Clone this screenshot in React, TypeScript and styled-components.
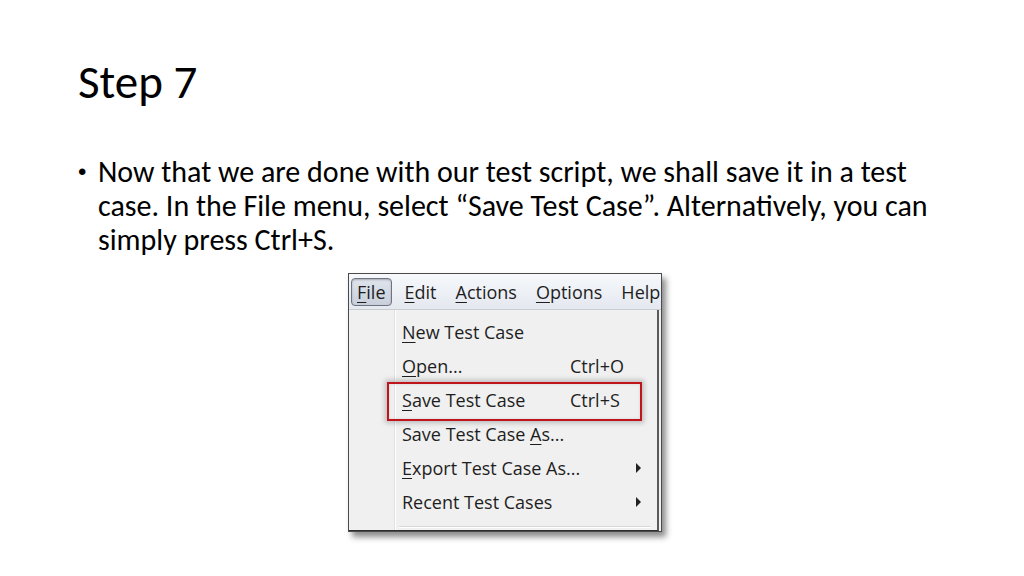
import React from 'react'
import styled, { createGlobalStyle } from 'styled-components'

const GlobalStyle = createGlobalStyle`
    html, body {
        margin: 0;
        padding: 0;
        background: #ffffff;
    }
    body {
        font-family: Carlito, "Open Sans", "Noto Sans", sans-serif;
        color: #000000;
    }
`

const Slide = styled.div`
    width: 1024px;
    height: 576px;
    box-sizing: border-box;
    padding: 52px 0 0 78px;
    display: flex;
    flex-direction: column;
    overflow: hidden;
`

const Title = styled.h1`
    margin: 0;
    font-weight: 400;
    font-size: 47px;
    line-height: 60px;
`

const Bullets = styled.ul`
    margin: 43px 0 0 0;
    padding: 0;
    list-style: none;
    width: 870px;
`

const Bullet = styled.li`
    position: relative;
    padding-left: 20px;
    font-size: 30px;
    line-height: 34px;
    &::before {
        content: '•';
        position: absolute;
        left: 0;
        top: 0;
        font-family: "Liberation Sans", sans-serif;
        font-size: 24px;
    }
`

const Figure = styled.div`
    margin: 16px 0 0 270px;
    display: flex;
`

const Shot = styled.div`
    position: relative;
    width: 314px;
    height: 259px;
    box-sizing: border-box;
    border: 1px solid #4a4a4a;
    background: #f0f0f0;
    box-shadow: 4px 5px 6px rgba(0, 0, 0, 0.45);
    display: flex;
    flex-direction: column;
    font-family: "Open Sans", "Noto Sans", sans-serif;
    font-size: 18px;
    color: #1e1e1e;
    overflow: hidden;
`

const MenuBar = styled.div`
    height: 36px;
    flex: none;
    box-sizing: border-box;
    display: flex;
    align-items: center;
    padding-left: 2px;
    background: linear-gradient(#f6f8fb, #e4e8ef);
    border-bottom: 1px solid #c9ccd3;
    white-space: nowrap;
`

const BarItem = styled.span<{ $active?: boolean; $gap?: number }>`
    box-sizing: border-box;
    height: 28px;
    display: flex;
    align-items: center;
    padding: 0 ${p => (p.$active ? '5px' : '0')};
    margin-right: ${p => p.$gap ?? 16}px;
    border: ${p => (p.$active ? '1px solid #6d7480' : '1px solid transparent')};
    border-radius: 4px;
    background: ${p => (p.$active ? 'linear-gradient(#dfe4ec, #c9d0dc)' : 'transparent')};
    box-shadow: ${p => (p.$active ? 'inset 0 1px 2px rgba(0,0,0,0.25)' : 'none')};
`

const Key = styled.u`
    text-decoration-thickness: 1px;
    text-underline-offset: 3px;
`

const Dropdown = styled.div`
    flex: 1;
    display: flex;
    border-right: 2px solid #5a5a5a;
    margin-right: 2px;
    border-bottom: 1px solid #2e2e2e;
`

const Gutter = styled.div`
    width: 45px;
    flex: none;
    border-right: 1px solid #e0e0e0;
    box-shadow: 1px 0 0 #ffffff;
`

const Items = styled.div`
    flex: 1;
    display: flex;
    flex-direction: column;
    padding-top: 5px;
`

const Row = styled.div`
    height: 34px;
    display: flex;
    align-items: center;
    padding-left: 7px;
    white-space: nowrap;
`

const Label = styled.span`
    width: 168px;
`

const Shortcut = styled.span`
    width: 64px;
`

const Arrow = styled.span`
    width: 0;
    height: 0;
    margin-left: 2px;
    border-top: 5px solid transparent;
    border-bottom: 5px solid transparent;
    border-left: 5px solid #222;
`

const Separator = styled.div`
    margin: 7px 6px 0 4px;
    height: 1px;
    background: #d8d8d8;
    box-shadow: 0 1px 0 #ffffff;
`

const Highlight = styled.div`
    position: absolute;
    left: 38px;
    top: 108px;
    width: 255px;
    height: 39px;
    box-sizing: border-box;
    border: 2px solid #c0141c;
    box-shadow: 0 0 5px 2px rgba(0, 0, 0, 0.22), inset 0 0 3px rgba(0, 0, 0, 0.12);
`

type MenuItem = { label: React.ReactNode; shortcut?: string; sub?: boolean }

const items: MenuItem[] = [
    { label: <><Key>N</Key>ew Test Case</> },
    { label: <><Key>O</Key>pen...</>, shortcut: 'Ctrl+O' },
    { label: <><Key>S</Key>ave Test Case</>, shortcut: 'Ctrl+S' },
    { label: <>Save Test Case <Key>A</Key>s...</> },
    { label: <><Key>E</Key>xport Test Case As...</>, sub: true },
    { label: <>Recent Test Cases</>, sub: true },
]

function FileMenu() {
    return (
        <Shot>
            <MenuBar>
                <BarItem $active $gap={12}><Key>F</Key>ile</BarItem>
                <BarItem $gap={17}><Key>E</Key>dit</BarItem>
                <BarItem $gap={17}><Key>A</Key>ctions</BarItem>
                <BarItem $gap={17}><Key>O</Key>ptions</BarItem>
                <BarItem>Help</BarItem>
            </MenuBar>
            <Dropdown>
                <Gutter />
                <Items>
                    {items.map((it, i) => (
                        <Row key={i}>
                            <Label>{it.label}</Label>
                            <Shortcut>{it.shortcut}</Shortcut>
                            {it.sub && <Arrow />}
                        </Row>
                    ))}
                    <Separator />
                </Items>
            </Dropdown>
            <Highlight />
        </Shot>
    )
}

export default function App() {
    return (
        <>
            <GlobalStyle />
            <Slide>
                <Title>Step 7</Title>
                <Bullets>
                    <Bullet>
                        Now that we are done with our test script, we shall save it in a test case. In the File menu, select “Save Test Case”. Alternatively, you can simply press Ctrl+S.
                    </Bullet>
                </Bullets>
                <Figure>
                    <FileMenu />
                </Figure>
            </Slide>
        </>
    )
}
